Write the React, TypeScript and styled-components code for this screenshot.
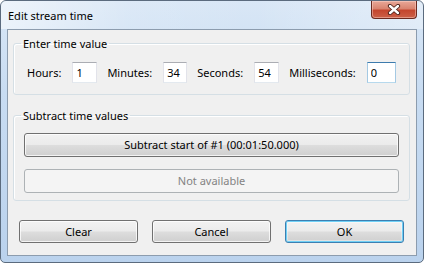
import React from 'react'
import styled, { createGlobalStyle } from 'styled-components'

const GlobalStyle = createGlobalStyle`
  html, body {
    margin: 0;
    padding: 0;
    background: #ffffff;
  }
  body {
    font-family: 'Noto Sans', 'Liberation Sans', sans-serif;
    font-size: 11px;
    color: #000000;
  }
`

const Window = styled.div`
  box-sizing: border-box;
  width: 424px;
  height: 263px;
  border: 1px solid #5b6b7e;
  border-radius: 6px 6px 5px 5px;
  background: linear-gradient(180deg, #d9e7f6 0%, #c8dcf2 35%, #bad2ed 100%);
  display: flex;
  flex-direction: column;
  overflow: hidden;
`

const TitleBar = styled.div`
  height: 28px;
  display: flex;
  align-items: flex-start;
  background: linear-gradient(
    90deg,
    rgba(255, 255, 255, 0.55) 0%,
    rgba(255, 255, 255, 0.1) 30%,
    rgba(255, 255, 255, 0) 60%,
    rgba(255, 255, 255, 0.3) 100%
  );
`

const Title = styled.div`
  padding: 7px 0 0 7px;
  line-height: 15px;
`

const CloseButton = styled.div`
  box-sizing: border-box;
  margin-left: auto;
  margin-right: 6px;
  width: 46px;
  height: 18px;
  border: 1px solid #6b2a20;
  border-top: none;
  border-radius: 0 0 4px 4px;
  background: linear-gradient(180deg, #e9a898 0%, #d98470 45%, #c4462e 55%, #cc6148 100%);
  box-shadow: inset 0 0 0 1px rgba(255, 220, 210, 0.45);
  display: flex;
  align-items: center;
  justify-content: center;
`

const Client = styled.div`
  flex: 1;
  margin: 0 6px 6px 6px;
  border: 1px solid #8c9cae;
  background: #f0f0f0;
  display: flex;
  flex-direction: column;
`

const Groups = styled.div`
  padding: 0 6px 0 5px;
  display: flex;
  flex-direction: column;
`

const Group = styled.fieldset<{ $gap: number }>`
  margin: ${(p) => p.$gap}px 0 0 0;
  padding: 0;
  min-width: 0;
  border: 1px solid #d5dfe5;
  border-radius: 3px;
  box-shadow: inset 1px 1px 0 #ffffff;
`

const Caption = styled.legend`
  margin-left: 7px;
  padding: 0 2px;
  line-height: 15px;
`

const FieldRow = styled.div`
  display: flex;
  align-items: center;
  padding: 11px 0 11px 13px;
`

const FieldLabel = styled.span`
  margin-right: 11px;
  line-height: 15px;
`

const TimeInput = styled.input<{ $w: number; $focused?: boolean }>`
  box-sizing: border-box;
  width: ${(p) => p.$w}px;
  height: 21px;
  margin: 0 10px 0 0;
  padding: 0 0 1px 3px;
  font: inherit;
  color: #000000;
  background: #ffffff;
  border: 1px solid;
  border-color: ${(p) =>
    p.$focused ? '#3d7bad #a4c9e3 #b7d9ed #a4c9e3' : '#abadb3 #e2e3ea #e3e9ef #e2e3ea'};
  outline: none;
`

const ButtonStack = styled.div`
  display: flex;
  flex-direction: column;
  gap: 12px;
  padding: 10px 10px 7px 10px;
`

const PushButton = styled.div<{ $h: number; $default?: boolean; $disabled?: boolean }>`
  box-sizing: border-box;
  height: ${(p) => p.$h}px;
  display: flex;
  align-items: center;
  justify-content: center;
  border: 1px solid ${(p) => (p.$disabled ? '#adb2b5' : p.$default ? '#3c7fb1' : '#707070')};
  border-radius: 3px;
  color: ${(p) => (p.$disabled ? '#838383' : '#000000')};
  background: ${(p) =>
    p.$disabled
      ? '#f4f4f4'
      : 'linear-gradient(180deg, #f2f2f2 0%, #ebebeb 48%, #dddddd 52%, #cfcfcf 100%)'};
  box-shadow: ${(p) =>
    p.$disabled
      ? 'none'
      : p.$default
      ? 'inset 0 0 0 1px #6fd0f6, inset 0 0 0 2px rgba(255,255,255,0.35)'
      : 'inset 0 0 0 1px rgba(255,255,255,0.75)'};
  line-height: 15px;
  padding-bottom: 1px;
`

const Footer = styled.div`
  display: flex;
  gap: 14px;
  padding: 19px 12px 0 11px;
`

const FooterButton = styled(PushButton)`
  width: 119px;
`

const CloseGlyph = () => (
  <svg width="14" height="11" viewBox="0 0 14 11">
    <path d="M3 2 L11 9 M11 2 L3 9" stroke="#4a2018" strokeWidth="4.2" strokeLinecap="round" />
    <path d="M3 2 L11 9 M11 2 L3 9" stroke="#ffffff" strokeWidth="2.4" strokeLinecap="round" />
  </svg>
)

const fields = [
  { label: 'Hours:', value: '1', w: 25 },
  { label: 'Minutes:', value: '34', w: 24 },
  { label: 'Seconds:', value: '54', w: 25 },
  { label: 'Milliseconds:', value: '0', w: 29, focused: true },
]

const App: React.FC = () => {
  return (
    <>
      <GlobalStyle />
      <Window>
        <TitleBar>
          <Title>Edit stream time</Title>
          <CloseButton>
            <CloseGlyph />
          </CloseButton>
        </TitleBar>
        <Client>
          <Groups>
            <Group $gap={6}>
              <Caption>Enter time value</Caption>
              <FieldRow>
                {fields.map((f) => (
                  <React.Fragment key={f.label}>
                    <FieldLabel>{f.label}</FieldLabel>
                    <TimeInput $w={f.w} $focused={f.focused} defaultValue={f.value} />
                  </React.Fragment>
                ))}
              </FieldRow>
            </Group>
            <Group $gap={13}>
              <Caption>Subtract time values</Caption>
              <ButtonStack>
                <PushButton $h={24}>Subtract start of #1 (00:01:50.000)</PushButton>
                <PushButton $h={24} $disabled>
                  Not available
                </PushButton>
              </ButtonStack>
            </Group>
          </Groups>
          <Footer>
            <FooterButton $h={23}>Clear</FooterButton>
            <FooterButton $h={23}>Cancel</FooterButton>
            <FooterButton $h={23} $default>
              OK
            </FooterButton>
          </Footer>
        </Client>
      </Window>
    </>
  )
}

export default App
